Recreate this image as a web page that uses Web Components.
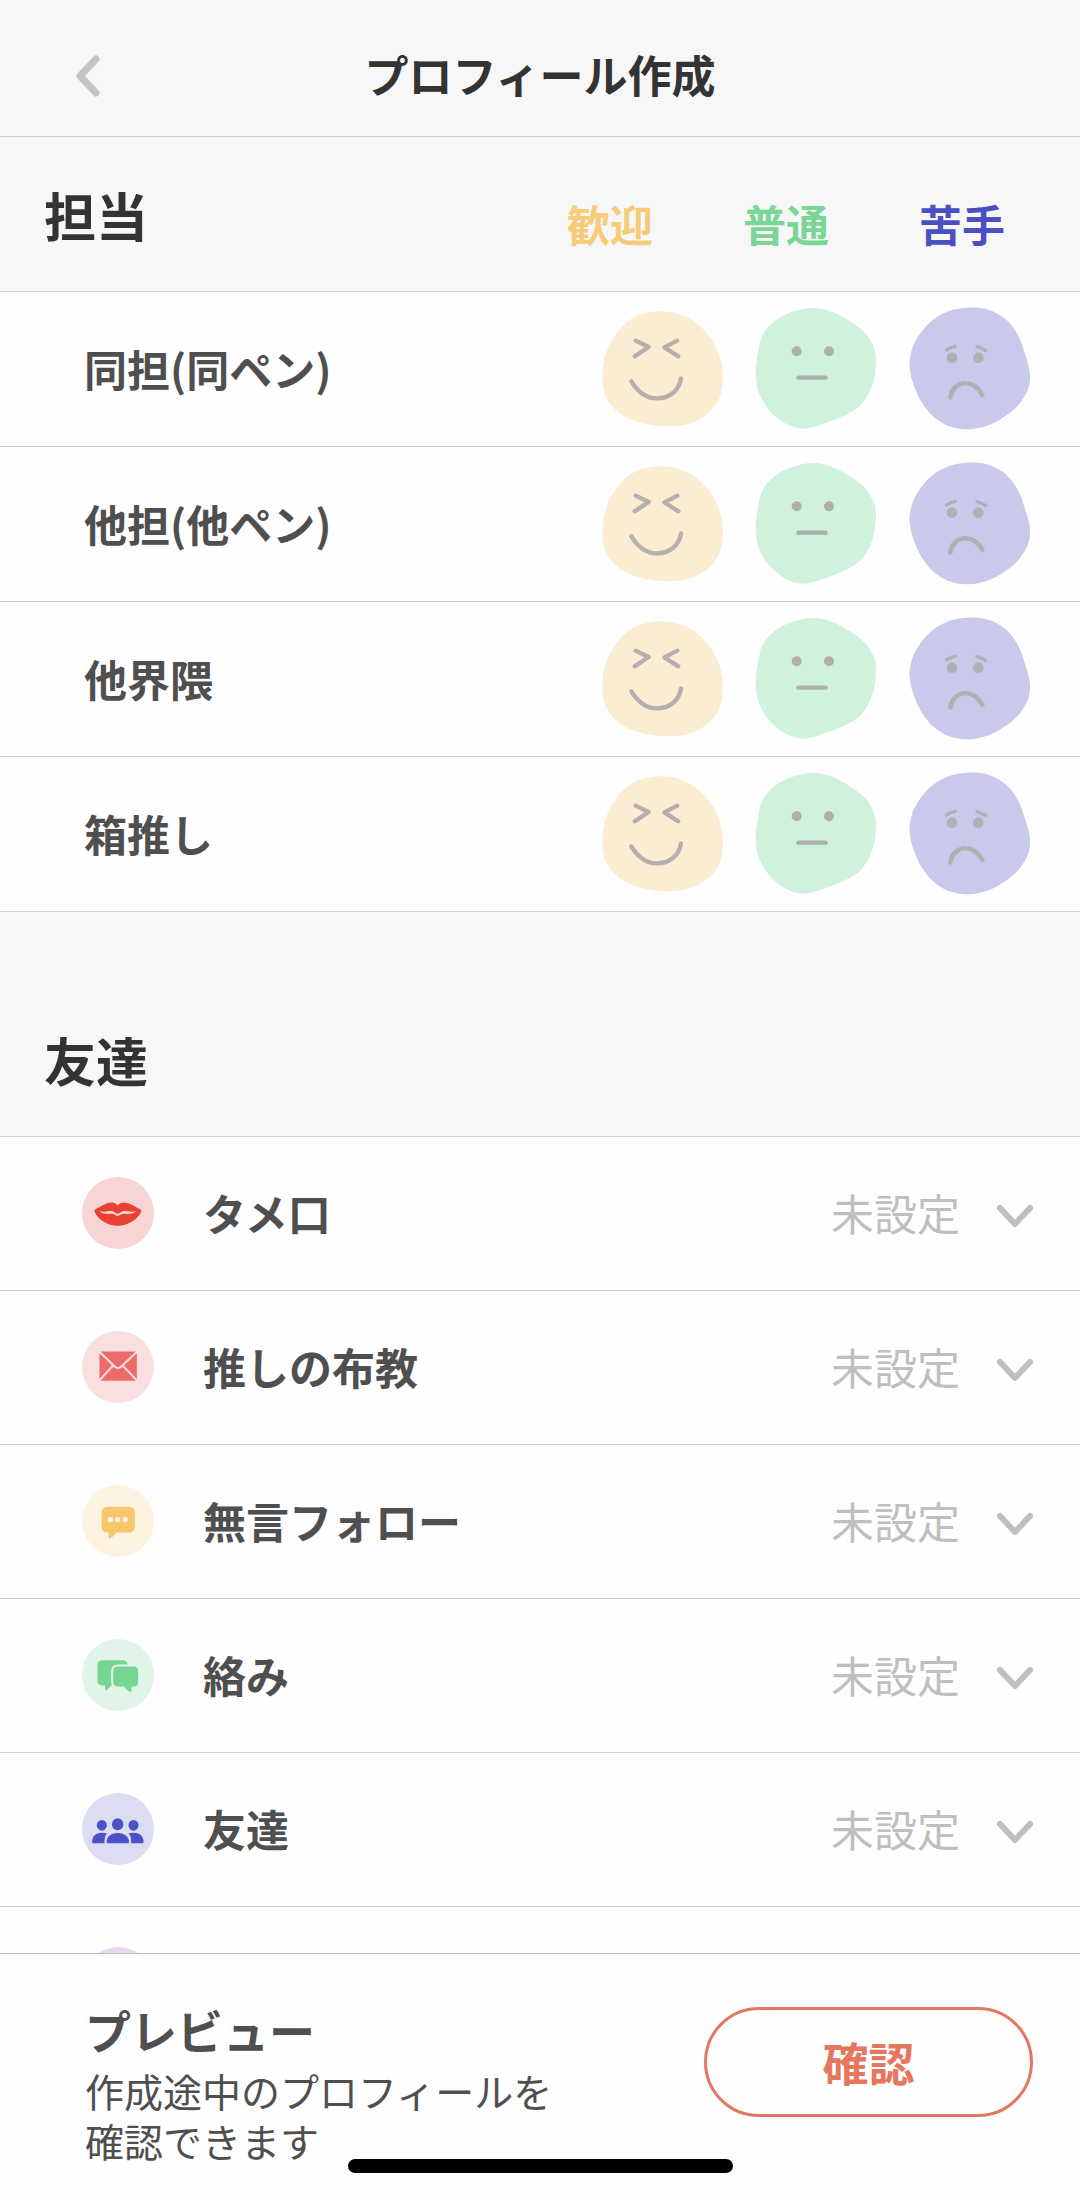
<!DOCTYPE html>
<html lang="ja">
<head>
<meta charset="utf-8">
<meta name="viewport" content="width=device-width, initial-scale=1">
<title>プロフィール作成</title>
<style>
  :root {
    --line: #cfcfcf;
    --text: #4f4f4f;
    --heading: #333333;
    --muted: #bfbfbf;
    --surface: #fefefe;
    --band: #f7f7f7;
    --welcome: #f6cb79;
    --neutral: #7ad695;
    --avoid: #4a4fc4;
    --accent: #e5775f;
  }
  body {
    margin: 0;
    background: var(--surface);
    color: var(--text);
    font-family: "Noto Sans CJK JP", sans-serif;
    font-size: 43px;
  }
</style>
</head>
<body>
<profile-page>
  <page-header slot="header">プロフィール作成</page-header>

  <section-band scale>担当</section-band>
  <face-row name="same">同担(同ペン)</face-row>
  <face-row name="other">他担(他ペン)</face-row>
  <face-row name="fandom">他界隈</face-row>
  <face-row name="group">箱推し</face-row>

  <section-band spaced>友達</section-band>
  <choice-row icon="lips">タメ口</choice-row>
  <choice-row icon="mail">推しの布教</choice-row>
  <choice-row icon="chat">無言フォロー</choice-row>
  <choice-row icon="talk">絡み</choice-row>
  <choice-row icon="people">友達</choice-row>
  <choice-row icon="plain"></choice-row>

  <preview-bar slot="footer">
    プレビュー
    <span slot="note">作成途中のプロフィールを<br>確認できます</span>
    <span slot="action">確認</span>
  </preview-bar>
</profile-page>

<script>
// Attaches an open shadow root holding the given markup.
function render(host, html) {
  host.attachShadow({ mode: 'open' }).innerHTML = html;
}

// Closed smooth curve through a list of points (Catmull-Rom to Bezier).
function blob(points) {
  const n = points.length;
  const at = i => points[(i + n) % n];
  let d = `M${at(0)}`;
  for (let i = 0; i < n; i++) {
    const [a, b, c, e] = [at(i - 1), at(i), at(i + 1), at(i + 2)];
    const p = [b[0] + (c[0] - a[0]) / 6, b[1] + (c[1] - a[1]) / 6];
    const q = [c[0] - (e[0] - b[0]) / 6, c[1] - (e[1] - b[1]) / 6];
    d += `C${p} ${q} ${c}`;
  }
  return d + 'Z';
}

const FACES = [
  { value: 'welcome', label: '歓迎', fill: '#fbedd2', ink: '#b6afad',
    shape: [[4,202],[10,152],[32,97],[67,52],[112,22],[177,10],[242,20],[292,50],[332,94],[355,142],[365,192],[362,247],[344,292],[307,327],[252,350],[177,354],[112,342],[57,317],[20,277],[6,237]],
    marks: `<path d="M104 98 143 117 101 145M229 98 190 118 232 145M91 220C112 254 140 271 167 271C206 271 234 248 240 211" stroke-width="13"/>` },
  { value: 'neutral', label: '普通', fill: '#d0f2dd', ink: '#aeb0ad',
    shape: [[2,190],[9,135],[21,84],[55,42],[110,12],[175,0],[240,15],[318,64],[352,108],[363,155],[353,228],[318,290],[265,324],[205,347],[145,362],[88,345],[40,304],[10,250]],
    marks: `<circle cx="125" cy="130" r="15"/><circle cx="222" cy="130" r="15"/><path d="M130 209H212" stroke-width="13"/>` },
  { value: 'avoid', label: '苦手', fill: '#c9caeb', ink: '#afb2b4',
    shape: [[3,150],[18,102],[60,46],[118,10],[178,-1],[240,6],[293,36],[328,84],[347,135],[362,190],[359,238],[334,284],[298,318],[243,350],[178,364],[118,354],[72,325],[36,280],[12,225],[3,185]],
    marks: `<circle cx="129" cy="149" r="16"/><circle cx="208" cy="149" r="16"/><path d="M112 126Q124 118 139 115M204 116Q218 120 230 128" stroke-width="10"/><path d="M124 268C132 216 195 210 220 261" stroke-width="14"/>` },
];

const ICONS = {
  lips: { back: '#f7d5d4', ink: '#e94235', art: `
    <path d="M37 98C52 90 72 75 90 76C97 77 102 81 106 84C110 81 115 77 122 76C140 75 160 90 176 98C178 112 146 145 106 145C66 145 36 112 37 98Z"/>
    <path d="M51 101C66 107 84 98 94 103C99 106 103 109 106 109C109 109 113 106 118 103C128 98 146 107 162 101C146 114 128 108 119 110C113 112 110 116 106 116C102 116 99 112 93 110C84 108 66 114 51 101Z" fill="#f7d5d4"/>` },
  mail: { back: '#f9dfdf', ink: '#ec6c68', art: `
    <rect x="52" y="61" width="111" height="87" rx="6"/>
    <path d="M50 60 98 106Q107 114 116 106L165 60M50 149 91 104M165 149 122 104" fill="none" stroke="#f9dfdf" stroke-width="6"/>` },
  chat: { back: '#fdf3e0', ink: '#f6c76d', art: `
    <path d="M76 65H139Q157 65 157 83V123Q157 141 139 141H103Q95 153 82 160Q79 160 79 156V141H76Q58 141 58 123V83Q58 65 76 65Z"/>
    <g fill="#fdf3e0"><circle cx="84" cy="103" r="8"/><circle cx="106" cy="103" r="8"/><circle cx="129" cy="103" r="8"/></g>` },
  talk: { back: '#e0f5e8', ink: '#76d591', art: `
    <path d="M61 63H120Q135 63 135 78V123Q135 138 120 138H86Q80 148 71 153Q68 152 69 148V138H61Q46 138 46 123V78Q46 63 61 63Z"/>
    <path d="M107 82H153Q167 82 167 96V127Q167 141 153 141H147V154Q146 159 142 157Q131 151 125 141H107Q93 141 93 127V96Q93 82 107 82Z" stroke="#e0f5e8" stroke-width="13" paint-order="stroke"/>` },
  people: { back: '#dcdcf3', ink: '#4d50c6', art: `
    <ellipse cx="59" cy="96" rx="15" ry="16"/><ellipse cx="153" cy="96" rx="15" ry="16"/><ellipse cx="106" cy="93" rx="17" ry="18"/>
    <path d="M73 146C73 110 139 110 140 146Q140 149 137 149H76Q73 149 73 146Z"/>
    <path d="M30 146C30 122 50 114 75 120Q66 128 67 149H33Q30 149 30 146ZM183 146C183 122 163 114 138 120Q147 128 146 149H180Q183 149 183 146Z"/>` },
  plain: { back: '#e9daf0', ink: '#e9daf0', art: '' },
};

customElements.define('profile-page', class extends HTMLElement {
  constructor() {
    super();
    render(this, `
      <style>
        :host { display: flex; flex-direction: column; height: 100vh; }
        main { flex: 1; min-height: 0; overflow: hidden; }
      </style>
      <slot name="header"></slot>
      <main><slot></slot></main>
      <slot name="footer"></slot>`);
  }
});

customElements.define('page-header', class extends HTMLElement {
  constructor() {
    super();
    render(this, `
      <style>
        :host { display: block; background: var(--band); border-bottom: 1px solid var(--line); }
        header { display: grid; grid-template-columns: 1fr auto 1fr; align-items: center; padding: 42px 64px 26px; }
        button { justify-self: start; display: flex; padding: 8px; border: 0; background: none; }
        h1 { margin: 0; padding-bottom: 4px; color: var(--heading); font-size: 44px; line-height: 64px; font-weight: 700; }
      </style>
      <header>
        <button type="button" aria-label="戻る">
          <svg width="32" height="48" viewBox="0 0 32 48" fill="none" stroke="#c4c4c4" stroke-width="7" stroke-linecap="round" stroke-linejoin="round"><path d="M24 7 8 24 24 41"/></svg>
        </button>
        <h1><slot></slot></h1>
      </header>`);
  }
});

customElements.define('section-band', class extends HTMLElement {
  constructor() {
    super();
    const scale = this.hasAttribute('scale')
      ? `<div class="scale">${FACES.map(f => `<span style="color:var(--${f.value})">${f.label}</span>`).join('')}</div>` : '';
    render(this, `
      <style>
        :host { display: flex; justify-content: space-between; align-items: flex-end; padding: 40px 75px 38px 44px;
                background: var(--band); border-bottom: 1px solid var(--line); }
        :host([spaced]) { padding-top: 110px; }
        h2 { margin: 0; color: var(--heading); font-size: 52px; line-height: 76px; font-weight: 700; }
        .scale { display: flex; gap: 90px; font-size: 43px; line-height: 60px; font-weight: 700; }
      </style>
      <h2><slot></slot></h2>${scale}`);
  }
});

customElements.define('face-row', class extends HTMLElement {
  constructor() {
    super();
    const name = this.getAttribute('name');
    render(this, `
      <style>
        :host { display: block; border-bottom: 1px solid var(--line); }
        fieldset { display: flex; justify-content: space-between; align-items: center; margin: 0; padding: 16px 49px 16px 84px; border: 0; min-width: 0; }
        .name { padding-bottom: 2px; font-weight: 700; line-height: 64px; }
        .faces { display: flex; gap: 32px; }
        label { display: grid; cursor: pointer; }
        input, svg { grid-area: 1 / 1; width: 122px; height: 122px; margin: 0; }
        input { appearance: none; }
        svg { overflow: visible; pointer-events: none; }
      </style>
      <fieldset aria-labelledby="name">
        <span class="name" id="name"><slot></slot></span>
        <div class="faces">${FACES.map(f => `
          <label>
            <input type="radio" name="${name}" value="${f.value}" aria-label="${f.label}">
            <svg viewBox="0 0 366 366" aria-hidden="true">
              <path d="${blob(f.shape)}" fill="${f.fill}"/>
              <g fill="${f.ink}" stroke="${f.ink}" stroke-width="0" stroke-linecap="round" stroke-linejoin="round">${f.marks.replaceAll('<path', '<path fill="none"')}</g>
            </svg>
          </label>`).join('')}
        </div>
      </fieldset>`);
  }
});

customElements.define('choice-row', class extends HTMLElement {
  constructor() {
    super();
    const icon = ICONS[this.getAttribute('icon')];
    render(this, `
      <style>
        :host { display: flex; align-items: center; padding: 40px 42px 41px 82px; border-bottom: 1px solid var(--line); }
        .icon { flex: none; width: 72px; height: 72px; margin-right: 49px; }
        label { flex: 1; padding-bottom: 2px; font-weight: 700; line-height: 64px; }
        .pick { display: grid; align-items: center; }
        .pick > * { grid-area: 1 / 1; }
        select { appearance: none; border: 0; margin: 0; padding: 0 78px 2px 0; background: none; color: var(--muted);
                 font: inherit; font-weight: 400; line-height: 64px; }
        .arrow { justify-self: end; width: 46px; height: 28px; margin-top: 6px; pointer-events: none; }
      </style>
      <svg class="icon" viewBox="0 0 214 214" aria-hidden="true">
        <circle cx="107" cy="107" r="107" fill="${icon.back}"/>
        <g fill="${icon.ink}">${icon.art}</g>
      </svg>
      <label for="pick"><slot></slot></label>
      <div class="pick">
        <select id="pick"><option>未設定</option></select>
        <svg class="arrow" viewBox="0 0 46 28" fill="none" stroke="#bfbfbf" stroke-width="6" stroke-linecap="round" stroke-linejoin="round" aria-hidden="true"><path d="M8 6 23 22 38 6"/></svg>
      </div>`);
  }
});

customElements.define('preview-bar', class extends HTMLElement {
  constructor() {
    super();
    render(this, `
      <style>
        :host { display: block; position: relative; background: var(--surface); border-top: 1px solid #bdbdbd; }
        footer { display: flex; justify-content: space-between; align-items: flex-start; padding: 51px 47px 28px 85px; }
        h2 { margin: 0 0 12px; font-size: 46px; line-height: 48px; font-weight: 700; }
        p { margin: 0 0 1px; font-size: 39px; line-height: 50px; font-weight: 400; }
        button { min-width: 329px; height: 110px; margin-top: 2px; padding: 0 40px 3px; border: 3px solid var(--accent); border-radius: 55px;
                 background: none; color: var(--accent); font: inherit; font-size: 46px; font-weight: 700; }
        .home { position: absolute; left: 0; right: 0; bottom: 21px; width: 385px; height: 14px; margin: 0 auto;
                border-radius: 7px; background: #000; }
      </style>
      <footer>
        <div>
          <h2><slot></slot></h2>
          <p><slot name="note"></slot></p>
        </div>
        <button type="button"><slot name="action"></slot></button>
      </footer>
      <div class="home"></div>`);
  }
});
</script>
</body>
</html>
